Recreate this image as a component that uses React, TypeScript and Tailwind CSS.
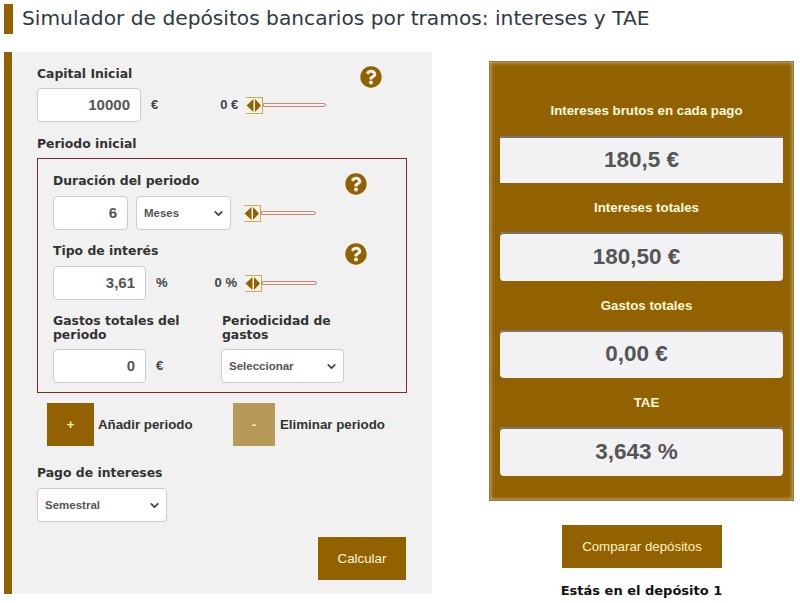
import { ChevronDown } from 'lucide-react';
import { FaQuestionCircle } from 'react-icons/fa';

const dejavu = "font-['DejaVu_Sans',sans-serif]";
const liberation = "font-['Liberation_Sans',Arial,sans-serif]";

function Label({ children, className = '' }: { children: React.ReactNode; className?: string }) {
	return (
		<div className={`${dejavu} text-[12.4px] leading-[14px] font-bold text-[#333] ${className}`}>
			{children}
		</div>
	);
}

function Help({ className = '' }: { className?: string }) {
	return <FaQuestionCircle className={`size-[22px] text-[#926200] ${className}`} />;
}

function NumberInput({ value, width }: { value: string; width: string }) {
	return (
		<input
			readOnly
			value={value}
			className={`${liberation} ${width} h-[34px] rounded-[4px] border border-[#ccc] bg-white pr-[10px] pb-[2px] text-right text-[15px] font-bold text-[#555]`}
		/>
	);
}

function Select({ value, width, options }: { value: string; width: string; options?: string[] }) {
	return (
		<div className={`relative ${width}`}>
			<select
				defaultValue={value}
				className={`${liberation} h-[34px] w-full appearance-none rounded-[4px] border border-[#ccc] bg-white pt-[1px] pl-[7px] text-[11.5px] font-bold text-[#555]`}
			>
				{(options ?? [value]).map((o) => (
					<option key={o}>{o}</option>
				))}
			</select>
			<ChevronDown
				strokeWidth={3.2}
				className="pointer-events-none absolute top-[11px] right-[6px] size-[13px] text-[#444]"
			/>
		</div>
	);
}

function Slider({ trackWidth }: { trackWidth: string }) {
	return (
		<div className="flex items-center">
			<div className="h-[17px] w-[17px] border-y border-r border-[#c9a95f] bg-[#f7f3e6]">
				<svg viewBox="0 0 16 15" className="h-[15px] w-[16px]">
					<polygon points="0.5,7.5 7.5,1 7.5,14" fill="#926200" />
					<polygon points="9,1 9,14 15,7.5" fill="#926200" />
				</svg>
			</div>
			<div className={`${trackWidth} h-[4px] rounded-r-[2px] border border-[#c98a70] bg-[#f1f1f1]`} />
		</div>
	);
}

function Unit({ children, className = '' }: { children: React.ReactNode; className?: string }) {
	return (
		<span className={`${liberation} text-[13px] font-bold text-[#444] ${className}`}>{children}</span>
	);
}

type ResultProps = {
	label: string;
	value: string;
	labelClass: string;
	boxClass: string;
};

function Result({ label, value, labelClass, boxClass }: ResultProps) {
	return (
		<div className="flex flex-col items-center">
			<div className={`${liberation} ${labelClass} ml-[10px] text-[13.3px] leading-[15px] font-bold text-[#fff8dc]`}>
				{label}
			</div>
			<div
				className={`${liberation} ${boxClass} flex w-[283px] items-center justify-center bg-[#f2f2f4] text-[22.5px] font-bold text-[#555] shadow-[inset_0_2px_0_#7a7468]`}
			>
				{value}
			</div>
		</div>
	);
}

export default function App() {
	return (
		<div className="relative h-[603px] w-[800px] overflow-hidden bg-white">
			<header className="ml-[4px] flex h-[34px] items-start pt-[4px]">
				<div className="h-[30px] w-[9px] bg-[#926200]" />
				<h1 className={`${dejavu} mt-[1px] ml-[9px] text-[20.2px] leading-[27px] font-normal text-[#2f3a42]`}>
					Simulador de depósitos bancarios por tramos: intereses y TAE
				</h1>
			</header>

			<div className="mt-[18px] flex items-start">
				<section className="ml-[4px] h-[542px] w-[428px] border-l-[8px] border-[#926200] bg-[#f1f1f1] pt-[14px] pl-[25px]">
					<div className="flex w-[345px] items-start justify-between">
						<Label className="mt-[1px]">Capital Inicial</Label>
						<Help />
					</div>
					<div className="flex items-center">
						<NumberInput value="10000" width="w-[104px]" />
						<Unit className="ml-[10px]">€</Unit>
						<Unit className="ml-[62px]">0 €</Unit>
						<div className="ml-[8px]">
							<Slider trackWidth="w-[63px]" />
						</div>
					</div>

					<Label className="mt-[15px]">Periodo inicial</Label>

					<div className="mt-[7px] h-[235px] w-[370px] border border-[#7a2a30] pt-[14px] pl-[15px]">
						<div className="flex w-[314px] items-start justify-between">
							<Label className="mt-[1px]">Duración del periodo</Label>
							<Help />
						</div>
						<div className="mt-[1px] flex items-center">
							<NumberInput value="6" width="w-[75px]" />
							<div className="ml-[8px]">
								<Select value="Meses" width="w-[95px]" options={['Meses', 'Años']} />
							</div>
							<div className="ml-[13px]">
								<Slider trackWidth="w-[55px]" />
							</div>
						</div>

						<div className="mt-[13px] flex w-[314px] items-start justify-between">
							<Label className="mt-[1px]">Tipo de interés</Label>
							<Help />
						</div>
						<div className="mt-[1px] flex items-center">
							<NumberInput value="3,61" width="w-[93px]" />
							<Unit className="ml-[10px]">%</Unit>
							<Unit className="ml-[47px]">0 %</Unit>
							<div className="ml-[8px]">
								<Slider trackWidth="w-[55px]" />
							</div>
						</div>

						<div className="mt-[14px] flex">
							<div className="w-[168px]">
								<Label className="h-[28px] w-[140px]">Gastos totales del periodo</Label>
								<div className="mt-[7px] flex items-center">
									<NumberInput value="0" width="w-[93px]" />
									<Unit className="ml-[10px]">€</Unit>
								</div>
							</div>
							<div>
								<Label className="ml-[1px] h-[28px] w-[120px]">Periodicidad de gastos</Label>
								<div className="mt-[7px]">
									<Select value="Seleccionar" width="w-[123px]" options={['Seleccionar', 'Mensual', 'Anual']} />
								</div>
							</div>
						</div>
					</div>

					<div className="mt-[10px] ml-[10px] flex items-center">
						<button className={`${liberation} h-[43px] w-[47px] bg-[#926200] text-[13px] font-bold text-[#fff2c0]`}>+</button>
						<span className={`${liberation} ml-[4px] w-[135px] text-[13.3px] font-bold text-[#333]`}>Añadir periodo</span>
						<button className={`${liberation} h-[43px] w-[42px] bg-[#b89a58] text-[13px] font-bold text-[#fff2c0]`}>-</button>
						<span className={`${liberation} ml-[5px] text-[13.3px] font-bold text-[#333]`}>Eliminar periodo</span>
					</div>

					<Label className="mt-[20px]">Pago de intereses</Label>
					<div className="mt-[8px]">
						<Select value="Semestral" width="w-[130px]" options={['Mensual', 'Semestral', 'Anual']} />
					</div>

					<div className="mt-[15px] flex w-[369px] justify-end">
						<button className={`${liberation} h-[43px] w-[88px] bg-[#926200] text-[13.3px] text-[#fff8dc]`}>Calcular</button>
					</div>
				</section>

				<aside className="mt-[9px] ml-[57px] flex w-[305px] flex-col items-center">
					<div className="flex h-[440px] w-[305px] flex-col items-center border border-[#8a7a58] bg-[#926200] shadow-[inset_0_0_4px_#e0cc90]">
						<Result
							label="Intereses brutos en cada pago"
							value="180,5 €"
							labelClass="mt-[41px]"
							boxClass="mt-[18px] h-[47px]"
						/>
						<Result
							label="Intereses totales"
							value="180,50 €"
							labelClass="mt-[17px]"
							boxClass="mt-[17px] h-[49px] rounded-[4px] pr-[10px]"
						/>
						<Result
							label="Gastos totales"
							value="0,00 €"
							labelClass="mt-[17px]"
							boxClass="mt-[17px] h-[48px] rounded-[4px] pr-[10px]"
						/>
						<Result
							label="TAE"
							value="3,643 %"
							labelClass="mt-[17px]"
							boxClass="mt-[17px] h-[49px] rounded-[4px] pr-[10px]"
						/>
					</div>
					<button className={`${liberation} mt-[24px] ml-[1px] h-[43px] w-[160px] bg-[#926200] text-[13.3px] text-[#fff2c0]`}>
						Comparar depósitos
					</button>
					<div className={`${dejavu} mt-[15px] text-[13px] leading-[15px] font-bold text-[#111]`}>
						Estás en el depósito 1
					</div>
				</aside>
			</div>
		</div>
	);
}
